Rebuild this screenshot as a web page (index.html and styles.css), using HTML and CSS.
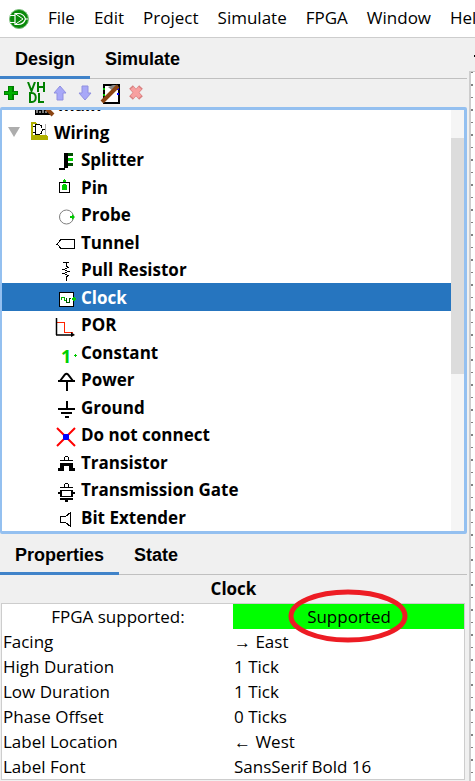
FILE: index.html
```html
<!DOCTYPE html>
<html lang="en">
<head>
    <meta charset="UTF-8">
    <meta name="viewport" content="width=device-width, initial-scale=1.0">
    <title>Logisim-evolution</title>
    <link rel="stylesheet" href="styles.css">
</head>
<body>
    <header class="menubar">
        <svg class="logo" width="22" height="22" viewBox="0 0 22 22">
            <circle cx="11" cy="11" r="9.5" fill="#0a8a0a" stroke="#7fbf7f"/>
            <path d="M2 7.5H7M2 14.5H7M7 5.5V16.5H10C14 16.5 16.5 14 17.5 11C16.5 8 14 5.500 10 5.500ZM17.500 11H20" fill="none" stroke="#fff" stroke-width="1.2"/>
            <path d="M7 5.500L15 11L7 16.500" fill="none" stroke="#fff"/>
        </svg>
        <nav class="menus">
            <button>File</button>
            <button>Edit</button>
            <button>Project</button>
            <button>Simulate</button>
            <button>FPGA</button>
            <button>Window</button>
            <button>Help</button>
        </nav>
    </header>

    <main class="workspace">
        <div class="sidebar">
            <div class="tabs">
                <button class="tab active">Design</button>
                <button class="tab">Simulate</button>
            </div>

            <div class="toolbar">
                <button aria-label="Add circuit">
                    <svg width="20" height="22" viewBox="0 0 20 22" shape-rendering="crispEdges">
                        <path d="M8 4h6v5h4v4h-4v5H8v-5H4V9h4z" fill="#008000"/>
                        <path d="M9 5h3v5h5v2h-5v5H9v-5H5v-2h4z" fill="#00b000"/>
                    </svg>
                </button>
                <button aria-label="Add VHDL">
                    <svg width="20" height="22" viewBox="0 0 20 22">
                        <path d="M3 0L6.500 9L10 0M13 0V10M19 0V10M13 5H19M5 11V20H7C12 20 12 11 7 11ZM14 11V20H19" fill="none" stroke="#008000" stroke-width="2"/>
                    </svg>
                </button>
                <button aria-label="Move up">
                    <svg width="20" height="22" viewBox="0 0 20 22">
                        <path d="M10 4L16 11H13V18H7V11H4Z" fill="#a8a8f8" stroke="#9090e0"/>
                    </svg>
                </button>
                <button aria-label="Move down">
                    <svg width="20" height="22" viewBox="0 0 20 22">
                        <path d="M10 18L4 11H7V4H13V11H16Z" fill="#a8a8f8" stroke="#9090e0"/>
                    </svg>
                </button>
                <button aria-label="Edit appearance">
                    <svg width="20" height="22" viewBox="0 0 20 22">
                        <rect x="4" y="3" width="15" height="18" fill="#fff" stroke="#000" stroke-width="2"/>
                        <path d="M3 7h2M3 13h2" stroke="#00c000" stroke-width="2"/>
                        <path d="M17 7h2M17 12h2" stroke="#00f" stroke-width="2"/>
                        <path d="M8 5L13 3L18 3L13 9Z" fill="#888"/>
                        <path d="M2 20L18 4" stroke="#8b4513" stroke-width="4"/>
                    </svg>
                </button>
                <button aria-label="Delete">
                    <svg width="20" height="22" viewBox="0 0 20 22">
                        <path d="M6 5L16 16M16 5L6 16" stroke="#d88080" stroke-width="5"/>
                        <path d="M7 6L15 15M15 6L7 15" stroke="#f8a0a0" stroke-width="4"/>
                    </svg>
                </button>
            </div>

            <div class="explorer">
                <ul class="tree">
                    <li class="circuit">
                        <svg class="icon" width="20" height="24" viewBox="0 0 20 24">
                            <rect x="2" y="10" width="15" height="12" fill="#000"/>
                            <path d="M4 20v-3M7 20v-2M10 20v-3M13 20v-2" stroke="#fff"/>
                            <path d="M11 13L20 22" stroke="#8b4513" stroke-width="4"/>
                        </svg>
                        <span>main</span>
                    </li>
                    <li class="folder">
                        <svg class="arrow" width="12" height="10" viewBox="0 0 12 10"><path d="M0 0H12L6 10Z" fill="#adadad"/></svg>
                        <svg class="icon" width="20" height="24" viewBox="0 0 20 24" shape-rendering="crispEdges">
                            <path d="M2 2h5l1 2H4v11h14v1h1v4H2z" fill="#b0b000"/>
                            <path d="M4 4h12v11H4z" fill="#fff"/>
                            <path d="M16 4h1v11h-1z" fill="#b0b0b0"/>
                            <path d="M4 6.500H6M4 12.500H6M6.500 4.500V14.500H9C14.500 14.500 14.500 4.500 9 4.500ZM13 9.500H16" fill="none" stroke="#000"/>
                        </svg>
                        <span>Wiring</span>
                    </li>
                    <li>
                        <svg class="icon" width="20" height="24" viewBox="0 0 20 24" shape-rendering="crispEdges">
                            <path d="M8 5h4v15H9v2H3v-2h5z"/>
                            <path d="M12 5h5v3h-5zM12 15h5v3h-5z" fill="#005000"/>
                            <path d="M12 10h5v3h-5z" fill="#00d000"/>
                        </svg>
                        <span>Splitter</span>
                    </li>
                    <li>
                        <svg class="icon" width="20" height="24" viewBox="0 0 20 24" shape-rendering="crispEdges">
                            <rect x="3.500" y="7.500" width="10" height="10" fill="none" stroke="#000"/>
                            <path d="M7 9h3v1h1v5H6v-5h1zM8 4h1v1h1v2H7V5h1z" fill="#00d000"/>
                        </svg>
                        <span>Pin</span>
                    </li>
                    <li>
                        <svg class="icon" width="20" height="24" viewBox="0 0 20 24">
                            <circle cx="10.500" cy="14" r="7" fill="none" stroke="#808080"/>
                            <path d="M14 13h2v-2l3 3l-3 3v-2h-2z" fill="#00c800"/>
                        </svg>
                        <span>Probe</span>
                    </li>
                    <li>
                        <svg class="icon" width="20" height="24" viewBox="0 0 20 24" shape-rendering="crispEdges">
                            <path d="M0 14H1L5 9.500H18.500V18.500H5L1 14" fill="none" stroke="#000"/>
                        </svg>
                        <span>Tunnel</span>
                    </li>
                    <li>
                        <svg class="icon" width="20" height="24" viewBox="0 0 20 24" shape-rendering="crispEdges">
                            <path d="M7 4.500H13M10 4V8L12.500 9.500L7.500 11.500L12.500 13.500L7.500 15.500L12.500 17.500L10 19V23" fill="none" stroke="#000"/>
                        </svg>
                        <span>Pull Resistor</span>
                    </li>
                    <li class="selected">
                        <svg class="icon" width="20" height="24" viewBox="0 0 20 24" shape-rendering="crispEdges">
                            <rect x="3.500" y="7.500" width="14" height="14" fill="#fff" stroke="#000"/>
                            <path d="M5 12h4v4H8v-3H6v2H5zM8 15h2v1H8z" fill="#00b000"/>
                            <path d="M10 13h1v4h2v-4h2v1h-1v4h-4z" fill="#005000"/>
                            <path d="M16 13h4v2h-4zM17 12h2v4h-2z" fill="#00c800"/>
                        </svg>
                        <span>Clock</span>
                    </li>
                    <li>
                        <svg class="icon" width="20" height="24" viewBox="0 0 20 24">
                            <path d="M1 9.500H8.500V19.500H17" fill="none" stroke="#f20" shape-rendering="crispEdges"/>
                            <path d="M0.500 5V22M0 22H17" fill="none" stroke="#000" stroke-width="1.500"/>
                            <path d="M15 19L19 22L15 24Z"/>
                        </svg>
                        <span>POR</span>
                    </li>
                    <li>
                        <svg class="icon" width="20" height="24" viewBox="0 0 20 24">
                            <text class="digit" x="5" y="23">1</text>
                            <path d="M18 15.500h3M19.500 14v3" stroke="#00c800" shape-rendering="crispEdges"/>
                        </svg>
                        <span>Constant</span>
                    </li>
                    <li>
                        <svg class="icon" width="20" height="24" viewBox="0 0 20 24">
                            <path d="M4 13L9 6.500Q10.500 5 12 6.500L17 13M2 13H19M11 13V23" fill="none" stroke="#000" stroke-width="2"/>
                        </svg>
                        <span>Power</span>
                    </li>
                    <li>
                        <svg class="icon" width="20" height="24" viewBox="0 0 20 24" shape-rendering="crispEdges">
                            <path d="M10 6h2v7h7v2H2v-2h8zM5 17h11v2H5zM9 21h4v2H9z"/>
                        </svg>
                        <span>Ground</span>
                    </li>
                    <li>
                        <svg class="icon" width="20" height="24" viewBox="0 0 20 24">
                            <path d="M1 5L19 23M19 5L1 23" stroke="#f00" stroke-width="2"/>
                            <rect x="7" y="11" width="6" height="6" rx="1" fill="#00f"/>
                        </svg>
                        <span>Do not connect</span>
                    </li>
                    <li>
                        <svg class="icon" width="20" height="24" viewBox="0 0 20 24" shape-rendering="crispEdges">
                            <path d="M8.500 10V8L9.500 6.500H11.500L12.500 8V10M4 10.500H17" fill="none" stroke="#000"/>
                            <path d="M4 13h13v5h2v3h-6v-5H8v5H2v-3h2z"/>
                        </svg>
                        <span>Transistor</span>
                    </li>
                    <li>
                        <svg class="icon" width="20" height="24" viewBox="0 0 20 24" shape-rendering="crispEdges">
                            <path d="M8.500 9V7L9.500 5.500H11.500L12.500 7V9M4 9.500H17" fill="none" stroke="#000"/>
                            <path d="M4 12h13v2h2v2h-2v3H4v-3H2v-2h2zM6 13v5h9v-5z" fill-rule="evenodd"/>
                            <path d="M4 20h13v2h-5v2H9v-2H4z"/>
                        </svg>
                        <span>Transmission Gate</span>
                    </li>
                    <li>
                        <svg class="icon" width="20" height="24" viewBox="0 0 20 24" shape-rendering="crispEdges">
                            <path d="M4.500 11.500H9.500L14.500 7.500V21.500L9.500 17.500H4.500Z" fill="none" stroke="#000"/>
                        </svg>
                        <span>Bit Extender</span>
                    </li>
                </ul>
                <div class="scrollbar"><div class="thumb"></div></div>
            </div>

            <div class="tabs">
                <button class="tab active">Properties</button>
                <button class="tab">State</button>
            </div>

            <h2 class="component-name">Clock</h2>
            <table class="properties">
                <tbody>
                    <tr class="fpga">
                        <th>FPGA supported:</th>
                        <td>
                            Supported
                            <svg class="marker" width="120" height="54" viewBox="0 0 120 54">
                                <ellipse cx="60" cy="27" rx="57" ry="24" fill="none" stroke="#ed1c24" stroke-width="5"/>
                            </svg>
                        </td>
                    </tr>
                    <tr><th>Facing</th><td>→ East</td></tr>
                    <tr><th>High Duration</th><td>1 Tick</td></tr>
                    <tr><th>Low Duration</th><td>1 Tick</td></tr>
                    <tr><th>Phase Offset</th><td>0 Ticks</td></tr>
                    <tr><th>Label Location</th><td>← West</td></tr>
                    <tr><th>Label Font</th><td>SansSerif Bold 16</td></tr>
                </tbody>
            </table>
        </div>
        <div class="editor">
            <div class="tools">
                <svg width="2" height="2" viewBox="0 0 2 2"><rect width="2" height="2"/></svg>
            </div>
            <div class="canvas"></div>
        </div>
    </main>
</body>
</html>
```
FILE: styles.css
```css
* {
    box-sizing: border-box;
}

body {
    margin: 0;
    height: 100vh;
    display: flex;
    flex-direction: column;
    overflow: hidden;
    background-color: #f0f0f0;
    color: #000;
    font-family: "Open Sans", "Noto Sans", sans-serif;
    font-size: 17px;
}

button {
    padding: 0;
    border: none;
    background: none;
    color: inherit;
    font: inherit;
    cursor: pointer;
}

.menubar {
    display: flex;
    align-items: center;
    flex: none;
    height: 38px;
    padding-left: 8px;
    background-color: #fff;
    border-bottom: 1px solid #cdcdcd;
}

.logo {
    flex: none;
    margin-right: 18px;
}

.menus {
    display: flex;
    gap: 19px;
    padding-bottom: 2px;
}

.workspace {
    display: flex;
    flex: 1;
    min-height: 0;
}

.sidebar {
    display: flex;
    flex-direction: column;
    flex: 1;
    min-width: 0;
}

.tabs {
    display: flex;
    flex: none;
    height: 41px;
    border-bottom: 1px solid #c0c0c0;
}

.tab {
    height: 41px;
    padding: 4px 15px 0;
    border-bottom: 3px solid transparent;
    font-family: "Liberation Sans", Arial, sans-serif;
    font-size: 18px;
    font-weight: bold;
}

.tab.active {
    border-bottom-color: #4083c9;
}

.toolbar {
    display: flex;
    align-items: center;
    flex: none;
    gap: 5px;
    height: 28px;
}

.toolbar svg {
    display: block;
}

.explorer {
    display: flex;
    flex: 1;
    min-height: 0;
    overflow: hidden;
    border: 3px solid #94c0f0;
    border-left-width: 2px;
    border-radius: 2px;
    background-color: #fff;
}

/* scrolled down so the first row is partly hidden */
.tree {
    flex: 1;
    margin: -19px 0 0;
    padding: 0;
    list-style: none;
    font-weight: bold;
}

.tree li {
    display: flex;
    align-items: center;
    gap: 5px;
    height: 27px;
    padding-left: 54px;
}

.tree li:nth-child(even) {
    height: 28px;
}

.tree li.circuit {
    padding-left: 31px;
}

.tree li.folder {
    padding-left: 6px;
}

.tree .icon {
    flex: none;
    align-self: flex-start;
    margin-top: 2px;
    overflow: visible;
}

.tree .folder .arrow {
    margin-right: 4px;
}

.tree li.selected {
    background-color: #2675bf;
    color: #fff;
}

.digit {
    fill: #00d000;
    font-size: 18px;
}

.scrollbar {
    width: 13px;
    padding-top: 28px;
    background-color: #f5f5f5;
}

.thumb {
    height: 60%;
    background-color: #dcdcdc;
}

.component-name {
    flex: none;
    margin: 0;
    font-size: 17px;
    line-height: 28px;
    text-align: center;
}

.properties {
    flex: none;
    width: calc(100% - 3px);
    margin: 0 0 1px 1px;
    table-layout: fixed;
    border-collapse: separate;
    border-spacing: 0;
    border: 1px solid #cdcdcd;
    background-color: #fff;
}

.properties th,
.properties td {
    height: 25px;
    padding: 0 0 0 1px;
    line-height: 24px;
    font-weight: normal;
    text-align: left;
}

.properties .fpga th,
.properties .fpga td {
    text-align: center;
}

.properties .fpga td {
    position: relative;
    background-color: #0f0;
}

/* hand-drawn ring around the supported flag */
.marker {
    position: absolute;
    top: -15px;
    left: calc(50% - 61px);
}

.editor {
    display: flex;
    flex-direction: column;
    flex: none;
    width: 6px;
    margin-left: 2px;
}

.tools {
    height: 33px;
    padding-top: 13px;
    padding-left: 5px;
    line-height: 0;
}

.canvas {
    flex: 1;
    border-left: 2px solid #cdcdcd;
    border-top: 1px solid #cdcdcd;
    background-color: #fff;
    background-image:
        linear-gradient(#808080 2px, transparent 2px),
        linear-gradient(#808080 1px, transparent 1px);
    background-repeat: repeat-y;
    background-size: 2px 25px;
    background-position: 0 12px, 0 0;
}
```
